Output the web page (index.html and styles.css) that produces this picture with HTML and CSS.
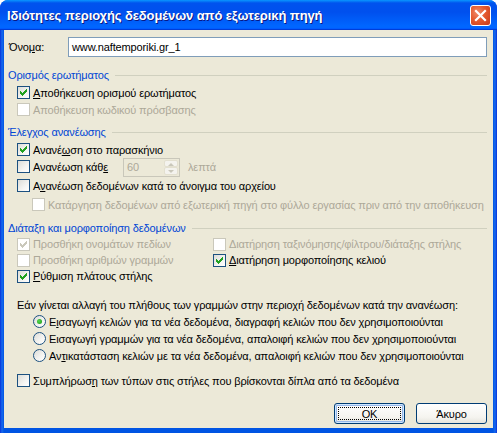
FILE: index.html
```html
<!DOCTYPE html>
<html>
<head>
<meta charset="utf-8">
<link rel="stylesheet" href="styles.css">
</head>
<body>
<div class="window">
  <div class="titlebar">
    <span class="title">Ιδιότητες περιοχής δεδομένων από εξωτερική πηγή</span>
    <span class="close"><svg width="21" height="21" viewBox="0 0 21 21"><path d="M6 6 L15 15 M15 6 L6 15" stroke="#fff" stroke-width="2.2" stroke-linecap="square"/></svg></span>
  </div>
  <div class="client">
    <div class="name-row">
      <span class="name-label">Όνο<u>μ</u>α:</span>
      <span class="input">www.naftemporiki.gr_1</span>
    </div>

    <div class="group-head gh1"><span>Ορισμός ερωτήματος</span><i class="line"></i></div>
    <div class="row mt1"><span class="cb checked"></span><span class="lbl"><u>Α</u>ποθήκευση ορισμού ερωτήματος</span></div>
    <div class="row dis"><span class="cb"></span><span class="lbl">Αποθήκευση κωδικού πρόσβασης</span></div>

    <div class="group-head gh2"><span>Έλεγχος ανανέωσης</span><i class="line"></i></div>
    <div class="row mt1"><span class="cb checked"></span><span class="lbl">Ανανέ<u>ω</u>ση στο παρασκήνιο</span></div>
    <div class="row">
      <span class="cb"></span><span class="lbl every">Ανανέωση κάθ<u>ε</u></span>
      <span class="spin"><span class="spin-val">60</span><span class="spin-btns"><span class="sb up"></span><span class="sb down"></span></span></span>
      <span class="lbl minutes">λεπτά</span>
    </div>
    <div class="row mt2"><span class="cb"></span><span class="lbl">Α<u>ν</u>ανέωση δεδομένων κατά το άνοιγμα του αρχείου</span></div>
    <div class="row mt2 dis indent"><span class="cb"></span><span class="lbl">Κατάργηση δεδομένων από εξωτερική πηγή στο φύλλο εργασίας πριν από την αποθήκευση</span></div>

    <div class="group-head gh3"><span>Διάταξη και μορφοποίηση δεδομένων</span><i class="line"></i></div>
    <div class="grid">
      <div class="row r16 dis"><span class="cb checked"></span><span class="lbl">Προσθήκη ονομάτων πεδίων</span></div>
      <div class="row r16 dis"><span class="cb"></span><span class="lbl">Διατήρηση ταξινόμησης/φίλτρου/διάταξης στήλης</span></div>
      <div class="row r16 dis"><span class="cb"></span><span class="lbl">Προσθήκη αριθμών γραμμών</span></div>
      <div class="row r16"><span class="cb checked"></span><span class="lbl"><u>Δ</u>ιατήρηση μορφοποίησης κελιού</span></div>
      <div class="row r16"><span class="cb checked"></span><span class="lbl"><u>Ρ</u>ύθμιση πλάτους στήλης</span></div>
    </div>

    <div class="row question">Εάν γίνεται αλλαγή του πλήθους των γραμμών στην περιοχή δεδομένων κατά την ανανέωση:</div>
    <div class="row radio-row"><span class="rb on"></span><span class="lbl">Ε<u>ι</u>σαγωγή κελιών για τα νέα δεδομένα, διαγραφή κελιών που δεν χρησιμοποιούνται</span></div>
    <div class="row radio-row"><span class="rb"></span><span class="lbl">Εισαγωγή γραμμών για τα νέα δεδομένα, απαλοιφή κελιών που δεν <u>χ</u>ρησιμοποιούνται</span></div>
    <div class="row radio-row"><span class="rb"></span><span class="lbl">Αν<u>τ</u>ικατάσταση κελιών με τα νέα δεδομένα, απαλοιφή κελιών που δεν χρησιμοποιούνται</span></div>

    <div class="row fill-row"><span class="cb"></span><span class="lbl">Συμπλήρωσ<u>η</u> των τύπων στις στήλες που βρίσκονται δίπλα από τα δεδομένα</span></div>

    <div class="buttons">
      <span class="btn default"><span class="focus">OK</span></span>
      <span class="btn">Άκυρο</span>
    </div>
  </div>
</div>
</body>
</html>
```

FILE: styles.css
```css
* { box-sizing: border-box; }
html, body { margin: 0; padding: 0; background: #fff; }
body {
  font-family: "Liberation Sans", Arial, sans-serif;
  font-size: 11px;
  letter-spacing: -0.13px;
  color: #000;
}
u { text-decoration: underline; text-underline-offset: 1px; }

.window {
  width: 497px;
  height: 433px;
  background: linear-gradient(to right, #0831d9 0, #166aee 2px, #0054e3 4px, #0054e3 calc(100% - 4px), #166aee calc(100% - 2px), #0831d9 100%);
  border-radius: 8px 8px 0 0;
  display: flex;
  flex-direction: column;
  padding: 0 4px 5px 4px;
}

.titlebar {
  height: 30px;
  margin: 0 -4px;
  border-radius: 8px 8px 0 0;
  background: linear-gradient(to bottom, #0997ff 0%, #0053ee 10%, #0050ee 40%, #0066ff 86%, #0066ff 92%, #005bff 95%, #003dd7 97%, #003dd7 100%);
  display: flex;
  align-items: center;
  padding: 0 6px 0 7px;
}
.title {
  flex: 1;
  color: #fff;
  font-family: "Liberation Sans", Arial, sans-serif;
  font-weight: bold;
  font-size: 13px;
  letter-spacing: -0.1px;
  text-shadow: 1px 1px 0 #0a1883;
  padding-top: 1px;
  white-space: nowrap;
}
.close {
  width: 21px;
  height: 21px;
  border: 1px solid #fff;
  border-radius: 3px;
  background: radial-gradient(circle at 35% 35%, #f08c6c 0%, #e45a2f 45%, #c7391a 100%);
  display: flex;
  align-items: center;
  justify-content: center;
  margin-top: 1px;
}
.close svg { display: block; margin: -1px; }

.client {
  flex: 1;
  background: #ece9d8;
  display: flex;
  flex-direction: column;
  position: relative;
}

.name-row {
  display: flex;
  align-items: center;
  height: 20px;
  margin-top: 7px;
  padding: 0 6px 0 5px;
}
.name-label { width: 59px; }
.input {
  flex: 1;
  height: 20px;
  border: 1px solid #7f9db9;
  background: #fff;
  display: flex;
  align-items: center;
  padding-left: 3px;
}

.group-head {
  height: 17px;
  display: flex;
  align-items: center;
  color: #0046d5;
  padding: 0 6px 0 4px;
  white-space: nowrap;
}
.group-head .line {
  flex: 1;
  height: 1px;
  background: #d0d0bf;
  margin-left: 6px;
  margin-top: 1px;
}
.gh1 { margin-top: 9px; }
.gh2 { margin-top: 5px; }
.gh3 { margin-top: 6px; }

.row {
  height: 17px;
  display: flex;
  align-items: center;
  padding-left: 13px;
  white-space: nowrap;
}
.r16 { height: 16px; }
.mt1 { margin-top: 1px; }
.mt2 { margin-top: 2px; }
.indent { padding-left: 28px; }
.lbl { margin-left: 3px; }
.dis { color: #aca899; }

.cb {
  width: 13px;
  height: 13px;
  flex: none;
  border: 1px solid #1c5180;
  background: linear-gradient(135deg, #dcdcd7 0%, #f4f4f2 60%, #ffffff 100%);
  position: relative;
}
.cb.checked::after {
  content: "";
  position: absolute;
  left: 2px;
  top: 2px;
  width: 7px;
  height: 7px;
  background: no-repeat center / 7px 7px url("data:image/svg+xml,%3Csvg xmlns='http://www.w3.org/2000/svg' width='7' height='7' viewBox='0 0 7 7' shape-rendering='crispEdges'%3E%3Cpath fill='%2321a121' d='M6 0h1v3H6zM5 1h1v3H5zM4 2h1v3H4zM3 3h1v3H3zM2 4h1v3H2zM1 3h1v3H1zM0 2h1v3H0z'/%3E%3C/svg%3E");
}
.dis .cb {
  border-color: #cac8bb;
  background: #fff;
}
.dis .cb.checked::after {
  background-image: url("data:image/svg+xml,%3Csvg xmlns='http://www.w3.org/2000/svg' width='7' height='7' viewBox='0 0 7 7' shape-rendering='crispEdges'%3E%3Cpath fill='%23cac8bb' d='M6 0h1v3H6zM5 1h1v3H5zM4 2h1v3H4zM3 3h1v3H3zM2 4h1v3H2zM1 3h1v3H1zM0 2h1v3H0z'/%3E%3C/svg%3E");
}

.every { width: 90px; }
.spin {
  width: 57px;
  height: 19px;
  border: 1px solid #c9c7ba;
  background: #ece9d8;
  display: flex;
  margin-top: 1px;
}
.spin-val {
  flex: 1;
  color: #aca899;
  padding-left: 3px;
  display: flex;
  align-items: center;
}
.spin-btns {
  width: 15px;
  display: flex;
  flex-direction: column;
  padding: 1px 1px 1px 0;
}
.sb {
  flex: 1;
  border: 1px solid #e3e0d0;
  border-radius: 2px;
  background: #f4f3ee;
  position: relative;
}
.sb::after {
  content: "";
  position: absolute;
  left: 3px;
  width: 0; height: 0;
  border-left: 3px solid transparent;
  border-right: 3px solid transparent;
}
.sb.up::after { top: 2px; border-bottom: 3px solid #c9c7ba; }
.sb.down::after { top: 2px; border-top: 3px solid #c9c7ba; }
.minutes { margin-left: 8px; color: #aca899; }

.grid {
  display: grid;
  grid-template-columns: 196px 1fr;
}

.question { margin-top: 12px; }
.radio-row { padding-left: 29px; }
.rb {
  width: 13px;
  height: 13px;
  flex: none;
  border-radius: 50%;
  border: 1px solid #1c5180;
  background: linear-gradient(135deg, #dcdcd7 0%, #f4f4f2 60%, #ffffff 100%);
  position: relative;
}
.rb.on::after {
  content: "";
  position: absolute;
  left: 3px;
  top: 3px;
  width: 5px;
  height: 5px;
  border-radius: 50%;
  background: radial-gradient(circle at 40% 40%, #55d751 0%, #2fb12a 60%, #1a8a17 100%);
}

.fill-row { margin-top: 8px; }

.buttons {
  margin-top: 14px;
  display: flex;
  justify-content: flex-end;
  gap: 11px;
  padding-right: 6px;
}
.btn {
  width: 71px;
  height: 21px;
  border: 1px solid #003c74;
  border-radius: 3px;
  background: linear-gradient(to bottom, #ffffff 0%, #f5f4ef 70%, #e5e4dd 100%);
  display: flex;
  align-items: center;
  justify-content: center;
}
.btn.default {
  box-shadow: inset 0 0 0 1px #cee7ff, inset 0 0 0 2px #98b8ea;
  padding: 3px;
}
.focus {
  width: 100%;
  height: 100%;
  border: 1px dotted #000;
  display: flex;
  align-items: center;
  justify-content: center;
}
```
